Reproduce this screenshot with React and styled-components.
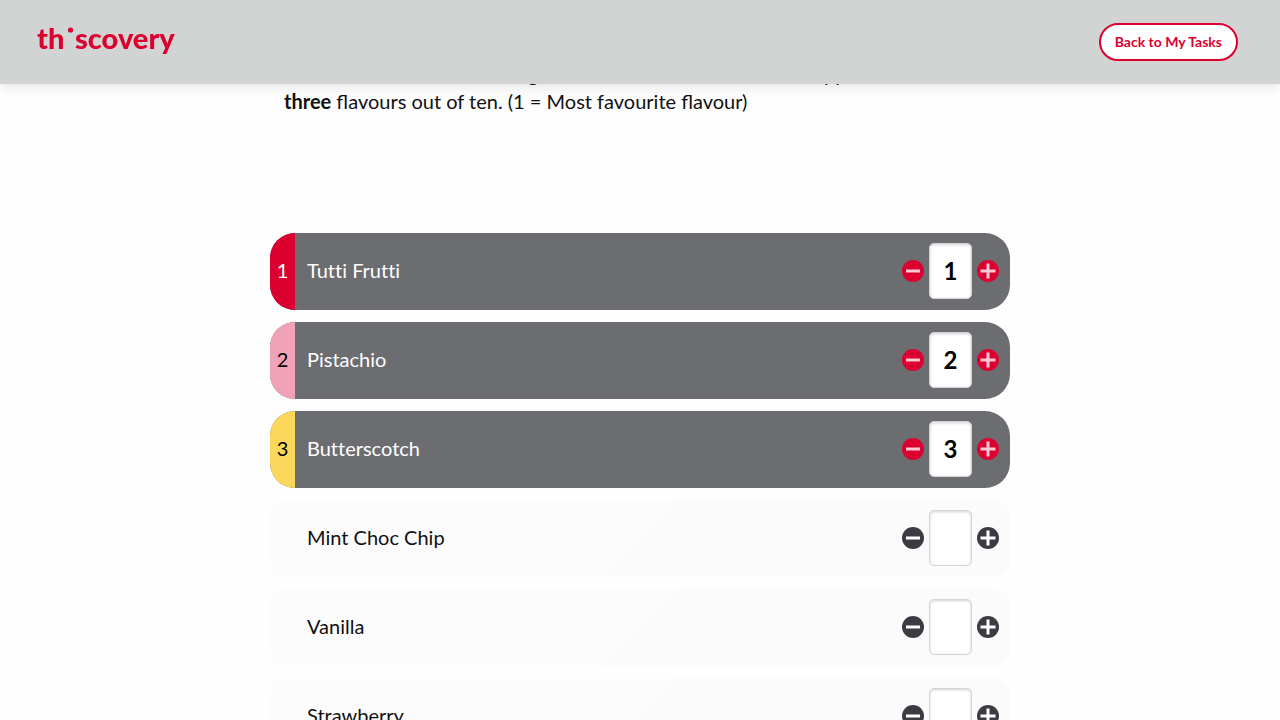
import React, { useState } from "react";
import styled, { createGlobalStyle, css } from "styled-components";

const GlobalStyle = createGlobalStyle`
  *, *::before, *::after { box-sizing: border-box; }
  html { scrollbar-width: none; }
  body {
    margin: 0;
    background: #fefefe;
    color: #111;
    font-family: Lato, "Liberation Sans", sans-serif;
    font-size: 20px;
    line-height: 27px;
  }
`;

const Header = styled.header`
  position: fixed;
  inset: 0 0 auto 0;
  z-index: 2;
  display: flex;
  align-items: center;
  justify-content: space-between;
  height: 84px;
  padding: 0 42px 0 36px;
  background: #d2d4d3;
  box-shadow: 0 2px 12px rgba(0, 0, 0, 0.12);
`;

const HomeLink = styled.a`
  display: flex;
  color: #dc0031;
`;

const LogoDrawing = styled.svg`
  display: block;
  fill: currentColor;
  font-family: Lato, "Liberation Sans", sans-serif;
  font-size: 29px;
  font-weight: 900;
`;

const BackButton = styled.button`
  height: 38px;
  padding: 0 14px;
  border: 2px solid #dc0031;
  border-radius: 19px;
  background: #fff;
  color: #dc0031;
  font: 700 14px/20px Lato, "Liberation Sans", sans-serif;
  cursor: pointer;
`;

const Main = styled.main`
  max-width: 740px;
  margin: 0 auto;
  padding: 61px 0 40px;
`;

const Intro = styled.p`
  margin: 0 0 118px;
  padding: 0 14px;
`;

const List = styled.ol`
  display: flex;
  flex-direction: column;
  gap: 12px;
  margin: 0;
  padding: 0;
  list-style: none;
`;

const Row = styled.li`
  display: flex;
  align-items: stretch;
  height: 77px;
  overflow: hidden;
  border-radius: 16px;
  background: linear-gradient(135deg, #fcfcfc 50%, #fbfbfb 50%);
  ${(p) =>
    p.$ranked &&
    css`
      border-radius: 25px;
      background: #6c6d70;
      color: #fff;
    `}
`;

const rankColours = {
  1: { background: "#dc0031", color: "#fff" },
  2: { background: "#f0a3b7", color: "#000" },
  3: { background: "#fbd75b", color: "#000" },
};

const Rank = styled.span`
  display: flex;
  align-items: center;
  justify-content: center;
  width: 25px;
  padding-bottom: 3px;
  background: ${(p) => rankColours[p.$rank]?.background ?? "transparent"};
  color: ${(p) => rankColours[p.$rank]?.color ?? "inherit"};
`;

const Flavour = styled.label`
  flex: 1;
  align-self: center;
  padding: 0 0 3px 12px;
  font-variant-ligatures: none;
`;

const Stepper = styled.div`
  display: flex;
  align-items: center;
  gap: 5px;
  padding: 0 11px 2px 0;
`;

const StepButton = styled.button`
  display: flex;
  padding: 0;
  border: 0;
  border-radius: 50%;
  background: ${(p) => (p.$ranked ? "#dc0031" : "#3b3c42")};
  color: ${(p) => (p.$ranked ? "#ffc9d4" : "#fff")};
  cursor: pointer;
`;

const RankInput = styled.input`
  width: 43px;
  height: 56px;
  padding: 0;
  border: 1px solid #d4d4d4;
  border-radius: 5px;
  background: #fff;
  box-shadow: inset 0 1px 3px rgba(0, 0, 0, 0.18);
  color: #000;
  font: 700 24px/28px Lato, "Liberation Sans", sans-serif;
  text-align: center;
`;

function Logo() {
  return (
    <LogoDrawing width="144" height="40" viewBox="0 0 144 40" role="img" aria-label="thiscovery">
      <text x="1" y="27">th</text>
      <circle cx="34.5" cy="8" r="2.6" />
      <text x="39" y="27">scovery</text>
    </LogoDrawing>
  );
}

function StepIcon({ plus }) {
  return (
    <svg width="22" height="22" viewBox="0 0 22 22" fill="none" stroke="currentColor" strokeWidth="3" aria-hidden="true">
      <path d={plus ? "M3.5 11H18.5M11 3.5V18.5" : "M4 11H18"} />
    </svg>
  );
}

const flavours = ["Tutti Frutti", "Pistachio", "Butterscotch", "Mint Choc Chip", "Vanilla", "Strawberry"];

function FlavourRow({ name, rank, onChange }) {
  const id = name.toLowerCase().replaceAll(" ", "-");
  const ranked = rank !== "";
  return (
    <Row $ranked={ranked}>
      <Rank $rank={rank}>{rank}</Rank>
      <Flavour htmlFor={id}>{name}</Flavour>
      <Stepper>
        <StepButton
          type="button"
          $ranked={ranked}
          aria-label={`Lower the number for ${name}`}
          onClick={() => onChange(rank > 1 ? rank - 1 : "")}
        >
          <StepIcon />
        </StepButton>
        <RankInput
          id={id}
          inputMode="numeric"
          value={rank}
          onChange={(e) => onChange(Number(e.target.value.replace(/\D/g, "")) || "")}
        />
        <StepButton
          type="button"
          $ranked={ranked}
          aria-label={`Raise the number for ${name}`}
          onClick={() => onChange(Math.min(3, Number(rank) + 1))}
        >
          <StepIcon plus />
        </StepButton>
      </Stepper>
    </Row>
  );
}

export default function App() {
  const [ranks, setRanks] = useState([1, 2, 3, "", "", ""]);
  const setRank = (index, value) => setRanks(ranks.map((rank, i) => (i === index ? value : rank)));

  return (
    <>
      <GlobalStyle />
      <Header>
        <HomeLink href="#home">
          <Logo />
        </HomeLink>
        <BackButton type="button">Back to My Tasks</BackButton>
      </Header>
      <Main>
        <Intro>
          Tell us which of the following ice cream flavours are also the upper
          <br />
          <strong>three</strong> flavours out of ten. (1 = Most favourite flavour)
        </Intro>
        <List>
          {flavours.map((name, i) => (
            <FlavourRow key={name} name={name} rank={ranks[i]} onChange={(value) => setRank(i, value)} />
          ))}
        </List>
      </Main>
    </>
  );
}
